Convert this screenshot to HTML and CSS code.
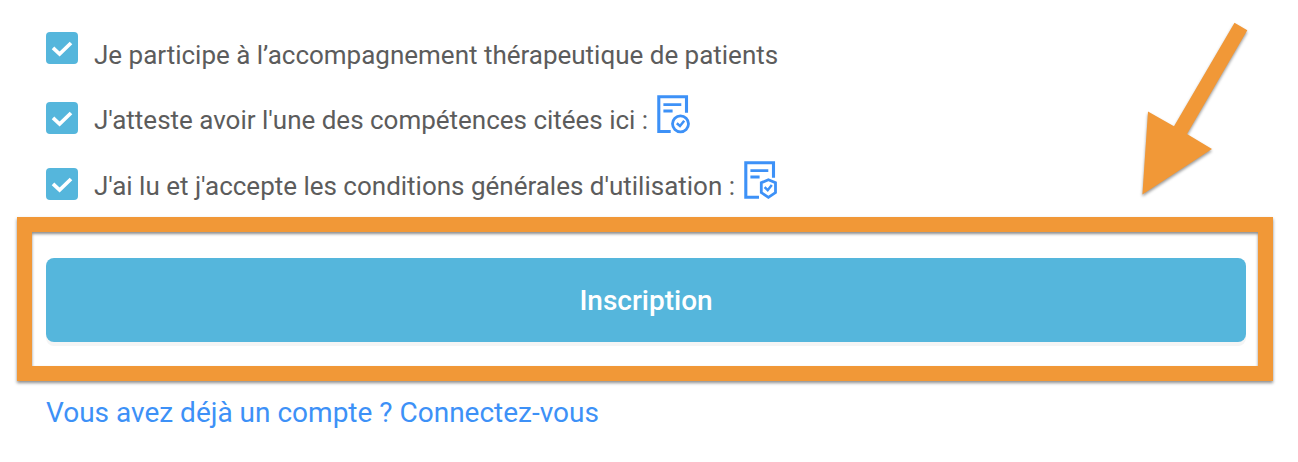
FILE: index.html
```html
<!DOCTYPE html>
<html lang="fr">
<head>
    <meta charset="utf-8" />
    <title>Inscription</title>
    <link rel="stylesheet" href="styles.css">
</head>
<body>
    <form class="signup">
        <label class="check_row row_first">
            <span class="checkbox"><svg viewBox="0 0 32 32"><path d="M7 15.8 13.6 22 25 11" /></svg></span>
            <span class="text">Je participe à l’accompagnement thérapeutique de patients</span>
        </label>
        <label class="check_row row_second">
            <span class="checkbox"><svg viewBox="0 0 32 32"><path d="M7 15.8 13.6 22 25 11" /></svg></span>
            <span class="text">J'atteste avoir l'une des compétences citées ici :</span>
            <svg class="doc_icon" viewBox="0 0 34 40">
                <path class="sheet" d="M13.7 37.5H1.8V2.8H29.5V18.8" />
                <path class="line" d="M6.4 10.6H24.3M6.4 17H15.6" />
                <circle class="badge" cx="23.5" cy="29.8" r="8" />
                <path class="tick" d="M19.8 29.3 23 32 27.2 26.8" />
            </svg>
        </label>
        <label class="check_row row_third">
            <span class="checkbox"><svg viewBox="0 0 32 32"><path d="M7 15.8 13.6 22 25 11" /></svg></span>
            <span class="text">J'ai lu et j'accepte les conditions générales d'utilisation :</span>
            <svg class="doc_icon" viewBox="0 0 34 40">
                <path class="sheet" d="M15 37.3H1.8V2.8H29.5V17.8" />
                <path class="line" d="M6.4 10.6H24.3M6.4 17H15.6" />
                <path class="badge" d="M24.4 19.8 31.5 22.7V32.6L24.4 37.4 17.3 32.6V22.7Z" />
                <path class="tick" d="M20.6 27.2 23.7 30.2 27.8 25" />
            </svg>
        </label>
        <div class="frame">
            <button class="submit" type="button">Inscription</button>
        </div>
        <a class="login" href="#">Vous avez déjà un compte ? Connectez-vous</a>
    </form>
    <svg class="arrow" viewBox="0 0 130 200">
        <polygon points="114.5,12.7 127.3,20.3 67,124 92,139 22.4,184.5 28,101.5 54,116.3" />
    </svg>
</body>
</html>
```
FILE: styles.css
```css
body {
    margin:0;
    background:#fff;
    font-family:Roboto, "Liberation Sans", sans-serif;
    position:relative;
}
.signup {
    display:flex;
    flex-direction:column;
    padding:28px 25px 0 17px;
}
.check_row {
    display:flex;
    align-items:center;
    height:40px;
    padding-left:29px;
}
.row_first .text {
    padding-top:14px;
}
.row_second {
    margin-top:30px;
}
.row_third {
    margin-top:26px;
}
.checkbox {
    width:32px;
    height:32px;
    border-radius:4px;
    background:#55b6dc;
}
.checkbox svg {
    display:block;
    width:32px;
    height:32px;
    fill:none;
    stroke:#fff;
    stroke-width:3.7;
}
.text {
    margin-left:16px;
    padding-top:4px;
    font-size:26px;
    line-height:32px;
    letter-spacing:-0.01px;
    color:#5c5c5c;
    white-space:nowrap;
}
.doc_icon {
    width:34px;
    height:40px;
    margin:-8px 0 0 9px;
    fill:none;
    stroke:#3d91f7;
    stroke-width:3.1;
}
.doc_icon .line,
.doc_icon .badge {
    stroke-width:2.8;
}
.doc_icon .tick {
    stroke-width:2.5;
}
.frame {
    box-sizing:border-box;
    height:164px;
    margin-top:13px;
    padding:26px 12px 0 14px;
    border:15px solid #f19837;
    box-shadow:0 2px 3px rgba(0,0,0,0.45), inset 0 2px 3px rgba(0,0,0,0.45);
}
.submit {
    display:block;
    width:100%;
    height:84px;
    padding:0;
    border:0;
    border-radius:8px;
    background:#55b6dc;
    box-shadow:0 4px 0 #f5f5f5;
    color:#fff;
    font:500 28px Roboto, "Liberation Sans", sans-serif;
}
.login {
    align-self:flex-start;
    margin:15px 0 0 29px;
    font-size:28px;
    line-height:34px;
    color:#3d91f7;
    text-decoration:none;
    white-space:nowrap;
}
/* arrow lies over the form and points to the button */
.arrow {
    position:absolute;
    left:1120px;
    top:10px;
    width:130px;
    height:200px;
    overflow:visible;
    fill:#f19837;
    filter:drop-shadow(0 2px 1.5px rgba(0,0,0,0.4));
}
```
